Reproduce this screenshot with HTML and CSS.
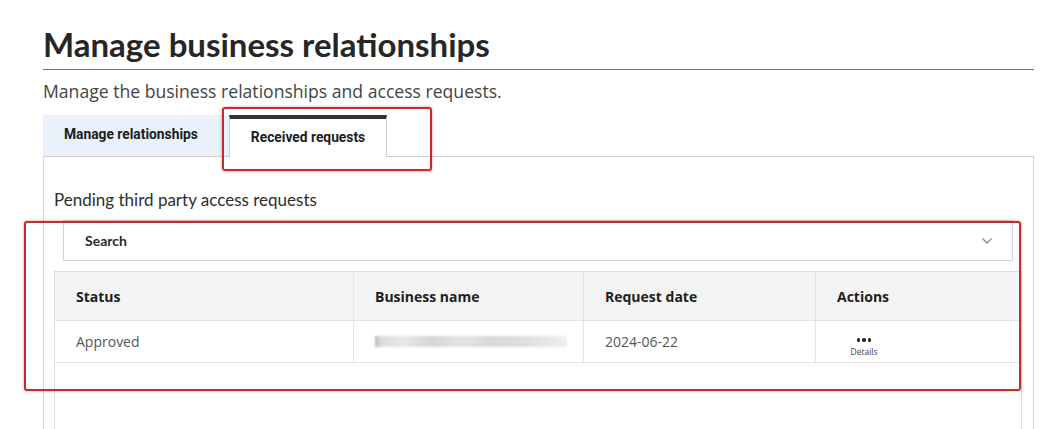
FILE: index.html
```html
<!DOCTYPE html>
<html lang="en">
<head>
<meta charset="utf-8">
<title>Manage business relationships</title>
<link rel="stylesheet" href="styles.css">
</head>
<body>
<div class="page">
  <h1 class="title">Manage business relationships</h1>
  <p class="subtitle">Manage the business relationships and access requests.</p>

  <div class="tabs">
    <div class="tab tab-inactive">Manage relationships</div>
    <div class="tab tab-active">Received requests</div>
    <div class="tab-fill"></div>
  </div>

  <div class="panel">
    <h2 class="section-title">Pending third party access requests</h2>

    <div class="search">
      <span class="search-label">Search</span>
      <svg class="chevron" width="12" height="8" viewBox="0 0 12 8"><path d="M1.5 1.5 L6 6 L10.5 1.5" fill="none" stroke="#8a8a8a" stroke-width="1.3"/></svg>
    </div>

    <div class="table-wrap">
      <div class="grid head">
        <div class="cell">Status</div>
        <div class="cell">Business name</div>
        <div class="cell">Request date</div>
        <div class="cell">Actions</div>
      </div>
      <div class="grid row">
        <div class="cell">Approved</div>
        <div class="cell"><span class="blurred"></span></div>
        <div class="cell">2024-06-22</div>
        <div class="cell action-cell">
          <div class="action">
            <span class="dots"><i></i><i></i><i></i></span>
            <span class="details">Details</span>
          </div>
        </div>
      </div>
    </div>
  </div>

  <div class="mark mark-tab"></div>
  <div class="mark mark-table"></div>
</div>
</body>
</html>
```

FILE: styles.css
```css
html, body {
  margin: 0;
  padding: 0;
  height: 429px;
  overflow: hidden;
  background: #ffffff;
}

.page {
  position: relative;
  padding: 0 28px 0 43px;
  font-family: "Open Sans", "Noto Sans", sans-serif;
  color: #333;
}

.title {
  margin: 0;
  padding: 24px 0 5px;
  font-family: Lato, "Open Sans", sans-serif;
  font-weight: 700;
  font-size: 33px;
  line-height: 40px;
  color: #262626;
  border-bottom: 1px solid #8c6464;
}

.subtitle {
  margin: 0;
  padding-top: 8px;
  font-size: 17.6px;
  line-height: 26px;
  color: #444;
}

.tabs {
  display: flex;
  margin-top: 11px;
  height: 42px;
}

.tab {
  box-sizing: border-box;
  display: flex;
  align-items: center;
  font-family: Roboto, Arial, sans-serif;
  font-weight: 700;
  font-size: 13.8px;
  color: #1c1c1c;
}

.tab-inactive {
  width: 186px;
  padding: 0 0 4px 21px;
  background: #e9f1fb;
  border-bottom: 1px solid #cfcfcf;
}

.tab-active {
  width: 158px;
  justify-content: center;
  background: #fff;
  border-top: 4px solid #333;
  border-left: 1px solid #cfcfcf;
  border-right: 1px solid #cfcfcf;
  padding-bottom: 3px;
}

.tab-fill {
  flex: 1;
  border-bottom: 1px solid #cfcfcf;
}

.panel {
  border-left: 1px solid #d6d6d6;
  border-right: 1px solid #d6d6d6;
  padding: 0 11px 0 10px;
  height: 272px;
}

.section-title {
  margin: 0;
  padding-top: 33px;
  font-family: Lato, "Open Sans", sans-serif;
  font-weight: 400;
  font-size: 17px;
  line-height: 20px;
  color: #2e2e2e;
}

.search {
  box-sizing: border-box;
  margin: 10px 9px 0;
  height: 41px;
  border: 1px solid #d4d4d4;
  display: flex;
  align-items: center;
  justify-content: space-between;
  padding: 0 19px 0 21px;
}

.search-label {
  font-family: Lato, "Open Sans", sans-serif;
  font-weight: 700;
  font-size: 14px;
  color: #2a2a2a;
}

.chevron {
  display: block;
}

.table-wrap {
  margin-top: 10px;
  border: 1px solid #dedede;
  border-bottom: none;
  height: 157px;
}

.grid {
  display: grid;
  grid-template-columns: 299px 230px 232px 1fr;
}

.cell {
  display: flex;
  align-items: center;
  padding-left: 21px;
  border-right: 1px solid #e4e4e4;
  font-size: 14px;
}

.cell:last-child {
  border-right: none;
}

.head {
  height: 48px;
  background: #f4f4f4;
  border-bottom: 1px solid #e2e2e2;
}

.head .cell {
  font-weight: 700;
  color: #1e1e1e;
}

.row {
  height: 41px;
  border-bottom: 1px solid #e2e2e2;
}

.row .cell {
  color: #555;
}

.blurred {
  display: block;
  width: 192px;
  height: 11px;
  background: linear-gradient(90deg, #b8b8b8 0%, #dcdcdc 3%, #e8e8e8 15%, #d6d6d6 30%, #e4e4e4 45%, #d8d8d8 62%, #e0e0e0 80%, #efefef 100%);
  filter: blur(1.2px);
}

.action-cell {
  padding-left: 33px;
}

.action {
  display: flex;
  flex-direction: column;
  align-items: center;
  width: 30px;
  padding-top: 12px;
}

.dots {
  display: flex;
  gap: 2px;
}

.dots i {
  display: block;
  width: 3.5px;
  height: 3.5px;
  border-radius: 50%;
  background: #222;
}

.details {
  margin-top: 5px;
  font-size: 8.5px;
  line-height: 10px;
  color: #444;
}

.mark {
  position: absolute;
  box-sizing: border-box;
  border: 2px solid #c02e2b;
  border-radius: 3px;
  box-shadow: 0 0 3px rgba(210, 60, 60, 0.55);
}

.mark-tab {
  left: 222px;
  top: 107px;
  width: 210px;
  height: 64px;
}

.mark-table {
  left: 24px;
  top: 221px;
  width: 997px;
  height: 170px;
}
```
